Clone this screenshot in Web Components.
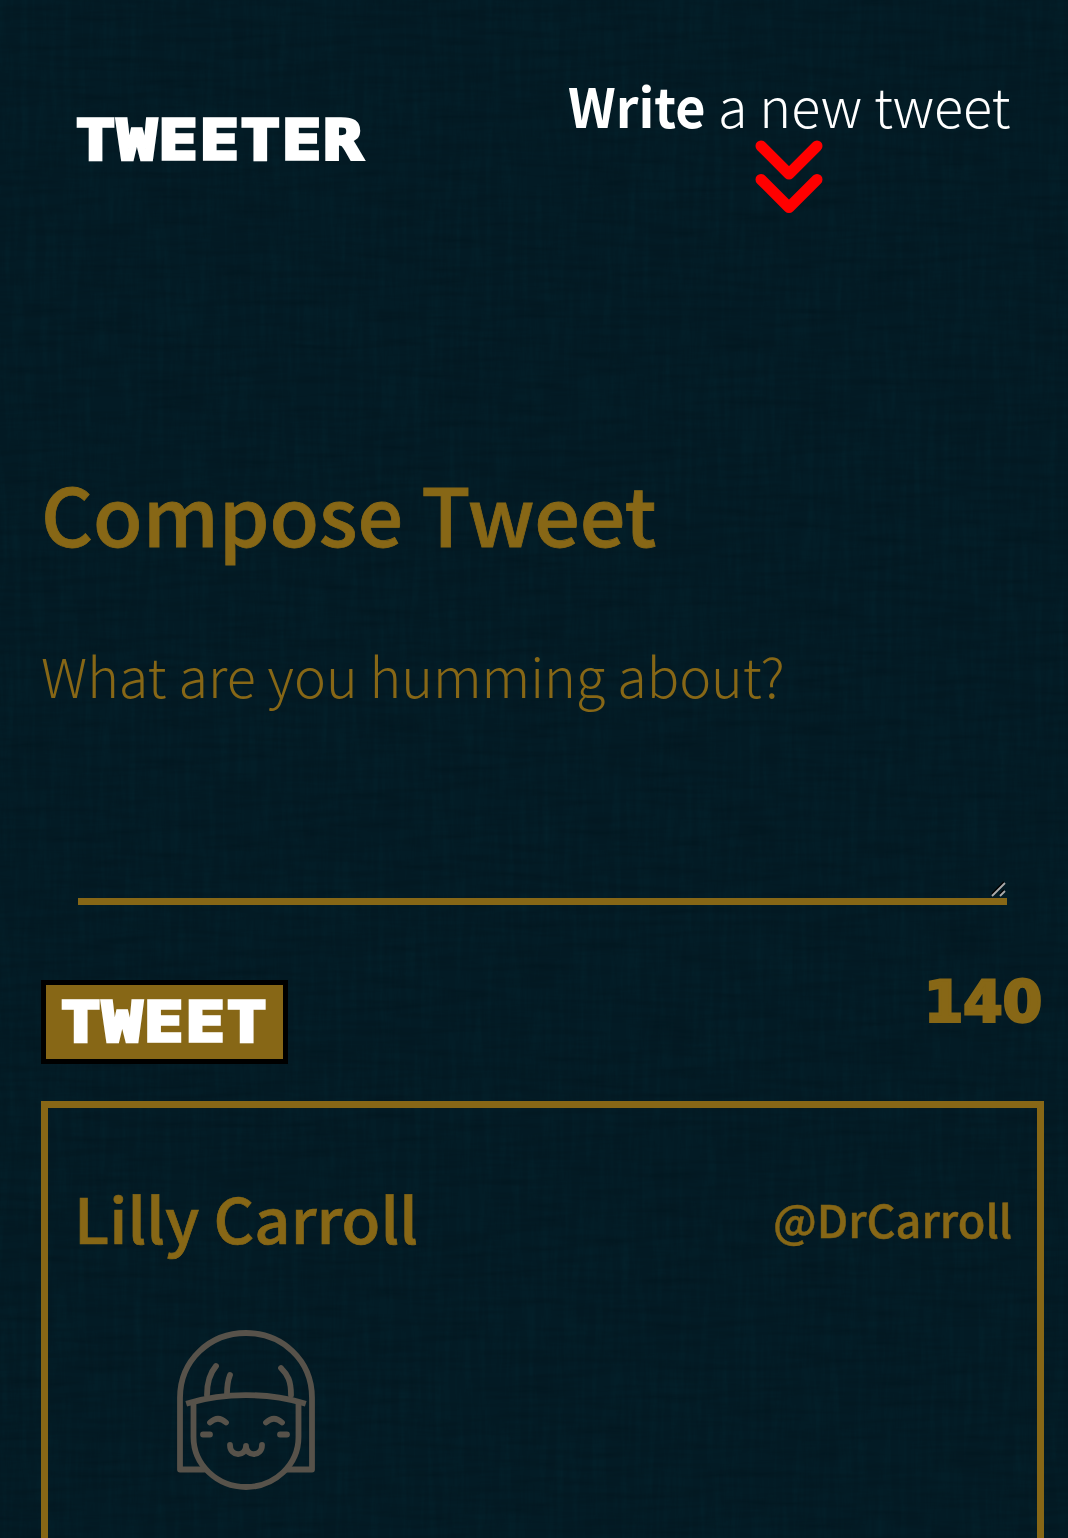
<!DOCTYPE html>
<html lang="en">
<head>
<meta charset="utf-8">
<title>Tweeter</title>
<style>
html,body{margin:0;background:#031b25}
body{height:1538px;overflow:hidden;font-family:"Noto Sans CJK JP",sans-serif;color:#876716}
</style>
</head>
<body>
<tweeter-app></tweeter-app>
<script>
const define=(name,html,ready)=>customElements.define(name,class extends HTMLElement{
  connectedCallback(){
    if(this.shadowRoot)return;
    this.attachShadow({mode:'open'}).innerHTML=html;
    if(ready)ready(this);
  }
});

/* A single line of lettering stretched to the width given in "w". */
define('fit-text',`<style>
:host{display:block;white-space:nowrap;flex:none;text-align:left}
span{display:inline-block;transform-origin:0 0;vertical-align:top}
</style><span><slot></slot></span>`,el=>{
  const w=+el.getAttribute('w'),s=el.shadowRoot.querySelector('span');
  el.style.width=w+'px';
  s.style.transform='scaleX('+w/s.offsetWidth+')';
});

define('linen-backdrop',`<style>
:host{position:absolute;inset:0;z-index:-1;overflow:hidden}
svg{display:block}
</style>
<svg width="1068" height="1538">
<filter id="v" x="0" y="0" width="100%" height="100%" color-interpolation-filters="sRGB"><feTurbulence type="fractalNoise" baseFrequency="0.14 0.014" numOctaves="3" seed="4"/><feColorMatrix values="0 0 0 0 0.02  0 0 0 0 0.18  0 0 0 0 0.22  0.5 0 0 0 -0.21"/></filter>
<filter id="h" x="0" y="0" width="100%" height="100%" color-interpolation-filters="sRGB"><feTurbulence type="fractalNoise" baseFrequency="0.014 0.14" numOctaves="3" seed="9"/><feColorMatrix values="0 0 0 0 0.005  0 0 0 0 0.07  0 0 0 0 0.1  0.75 0 0 0 -0.28"/></filter>
<rect width="1068" height="1538" filter="url(#v)"/><rect width="1068" height="1538" filter="url(#h)"/>
</svg>`);

define('down-chevrons',`<style>:host{display:block;width:68px;height:74px}svg{display:block}</style>
<svg width="68" height="74" viewBox="0 0 68 74" fill="none" stroke="#f00" stroke-width="11" stroke-linecap="round" stroke-linejoin="round"><path d="M6 6 34 34 62 6M6 39.500 34 67.500 62 39.500"/></svg>`);

define('nav-bar',`<style>
:host{display:flex;justify-content:space-between;align-items:flex-start;padding:75px 58px 0 76px;height:388px;box-sizing:border-box;color:#fff}
.logo{margin-top:35px;font:bold 55px/60px "DejaVu Sans Mono",monospace;letter-spacing:1.800px;-webkit-text-stroke:3.600px #fff}
.write{display:flex;flex-direction:column;align-items:center;font-size:54px;line-height:60px}
.row{display:flex;gap:13px}
b{font-weight:700}
.thin{font-weight:200}
down-chevrons{margin-top:5px}
</style>
<fit-text class="logo" w="288">TWEETER</fit-text>
<div class="write"><div class="row"><fit-text w="137"><b>Write</b></fit-text><fit-text class="thin" w="292">a new tweet</fit-text></div><down-chevrons></down-chevrons></div>`);

define('tweet-composer',`<style>
:host{display:block;padding:74px 26px 0 41px}
h2{margin:0;font-size:80.500px;line-height:100px;font-weight:500;height:183px;-webkit-text-stroke:.8px #876716}
p{margin:0;font-size:54px;line-height:60px;font-weight:200}
.field{display:flex;align-items:flex-end;justify-content:flex-end;margin:39px 20px 0 37px;height:154px;border-bottom:7px solid #876716;width:929px}
.grip{margin:0 1px 0 0}
.foot{display:flex;justify-content:space-between;align-items:flex-start;margin-top:75px;height:121px}
button{display:flex;align-items:center;justify-content:center;width:247px;height:84px;box-sizing:border-box;padding:0;border:5px solid #000;background:#876716;color:#fff;font:bold 55px/60px "DejaVu Sans Mono",monospace;letter-spacing:1.800px;-webkit-text-stroke:3.600px #fff}
.count{font:bold 57px/60px "DejaVu Sans",sans-serif;-webkit-text-stroke:3px #876716;margin-top:-8px}
</style>
<h2><fit-text w="615">Compose Tweet</fit-text></h2>
<p><fit-text w="744">What are you humming about?</fit-text></p>
<div class="field"><svg class="grip" width="15" height="17" viewBox="0 0 15 17" stroke-width="1.800" fill="none"><path d="M1 13 13 1M9 13 13 9" stroke="#000"/><path d="M1 15 14 2M9 15 14 10" stroke="#aaa"/></svg></div>
<div class="foot"><button><fit-text w="208">TWEET</fit-text></button><fit-text class="count" w="118">140</fit-text></div>`);

define('lilly-avatar',`<style>:host{display:block}svg{display:block}</style>
<svg width="140" height="160" viewBox="0 0 140 160" fill="none" stroke="#57524a" stroke-width="5.800" stroke-linecap="round" stroke-linejoin="round">
<path d="M28 139.500H4V68C4 30 34 3 70 3s66 27 66 65v71.500h-25"/>
<path stroke-linecap="square" d="M13 73C48 62.500 92 62.500 127 73"/>
<path d="M17.500 73v34c0 28 24 50 52.500 50s52.500-22 52.500-50V73"/>
<path d="M31 65c0-14 3-22 9-29M51 64c0-9 1-14 3-19M115 65c0-14-3-20-10-27M34 92.500q8-7.500 16 0M90 92.500q8-7.500 16 0"/>
<path d="M27 104.500h7M104 104.500h7M54 115c0 12 16 12 16 1 0 11 16 11 16-1"/>
</svg>`);

define('tweet-card',`<style>
:host{display:block;box-sizing:border-box;margin:0 24px 0 41px;border:7px solid #876716;height:600px;padding:69px 25px 0 27px}
header{display:flex;justify-content:space-between;line-height:80px;font-weight:500;-webkit-text-stroke:.7px #876716}
.name{font-size:62.400px;margin-left:-1px}.handle{font-size:44.600px;padding-top:2px;-webkit-text-stroke-width:.5px}
lilly-avatar{margin:71px 0 0 101px}
</style>
<header><fit-text class="name" w="344">Lilly Carroll</fit-text><fit-text class="handle" w="239">@DrCarroll</fit-text></header>
<lilly-avatar></lilly-avatar>`);

define('tweeter-app',`<style>
:host{display:block;position:relative;width:1068px;height:1538px;overflow:hidden;isolation:isolate}
</style><linen-backdrop></linen-backdrop><nav-bar></nav-bar><tweet-composer></tweet-composer><tweet-card></tweet-card>`);
</script>
</body>
</html>
